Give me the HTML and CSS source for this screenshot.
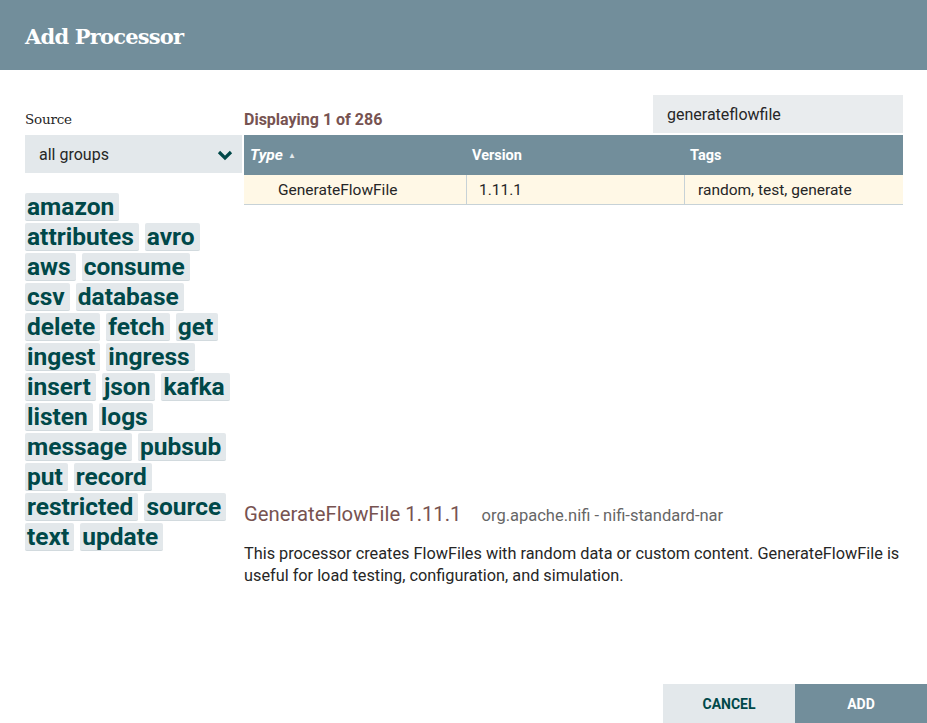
FILE: index.html
```html
<!DOCTYPE html>
<html>
<head>
<meta charset="utf-8">
<link rel="stylesheet" href="styles.css">
</head>
<body>
<div class="dialog">
  <div class="header">Add Processor</div>
  <div class="content">
    <div class="left">
      <div class="label">Source</div>
      <div class="select">
        <span>all groups</span>
        <svg class="chev" width="16" height="12" viewBox="0 0 16 12"><path d="M2 3 L8 9 L14 3" fill="none" stroke="#004849" stroke-width="3.2"/></svg>
      </div>
      <div class="tags">
        <span class="tag">amazon</span>
        <span class="tag">attributes</span><span class="tag">avro</span>
        <span class="tag">aws</span><span class="tag">consume</span>
        <span class="tag">csv</span><span class="tag">database</span>
        <span class="tag">delete</span><span class="tag">fetch</span><span class="tag">get</span>
        <span class="tag">ingest</span><span class="tag">ingress</span>
        <span class="tag">insert</span><span class="tag">json</span><span class="tag">kafka</span>
        <span class="tag">listen</span><span class="tag">logs</span>
        <span class="tag">message</span><span class="tag">pubsub</span>
        <span class="tag">put</span><span class="tag">record</span>
        <span class="tag">restricted</span><span class="tag">source</span>
        <span class="tag">text</span><span class="tag">update</span>
      </div>
    </div>
    <div class="right">
      <div class="toprow">
        <div class="count">Displaying 1 of 286</div>
        <div class="search">generateflowfile</div>
      </div>
      <div class="table">
        <div class="thead">
          <div class="th c1"><i>Type</i><span class="arrow">&#9650;</span></div>
          <div class="th c2">Version</div>
          <div class="th c3">Tags</div>
        </div>
        <div class="tr">
          <div class="td c1 name">GenerateFlowFile</div>
          <div class="td c2">1.11.1</div>
          <div class="td c3">random, test, generate</div>
        </div>
      </div>
      <div class="details">
        <div class="dtitle"><span class="dname">GenerateFlowFile 1.11.1</span><span class="dbundle">org.apache.nifi - nifi-standard-nar</span></div>
        <p class="desc">This processor creates FlowFiles with random data or custom content. GenerateFlowFile is useful for load testing, configuration, and simulation.</p>
      </div>
    </div>
  </div>
  <div class="footer">
    <div class="btn cancel">CANCEL</div>
    <div class="btn add">ADD</div>
  </div>
</div>
</body>
</html>
```
FILE: styles.css
```css
html, body { margin: 0; padding: 0; background: #fff; }
body { font-family: Roboto, "Noto Sans", sans-serif; color: #262626; }
.dialog { width: 927px; height: 723px; display: flex; flex-direction: column; overflow: hidden; }
.header {
  height: 70px; background: #728e9b; color: #fff;
  font-family: "DejaVu Serif", serif; font-weight: bold; font-size: 21px;
  letter-spacing: -0.8px;
  display: flex; align-items: center; padding: 3px 0 0 25px; box-sizing: border-box; flex: none;
}
.content { display: flex; padding: 25px 24px 0 25px; gap: 2px; }
.left { width: 217px; flex: none; }
.label { font-family: "DejaVu Serif", serif; font-size: 13.5px; color: #262626; height: 40px; display: flex; align-items: center; padding-top: 8px; box-sizing: border-box; letter-spacing: -0.2px; }
.select { height: 38px; background: #e3e8eb; display: flex; align-items: center; justify-content: space-between; padding: 0 9px 0 14px; font-size: 16px; color: #262626; }
.chev { margin-top: 1px; }
.tags { margin-top: 20px; display: flex; flex-wrap: wrap; column-gap: 6px; row-gap: 2px; width: 212px; }
.tag {
  background: #e3e8eb; color: #004849; font-weight: bold; font-size: 24.5px;
  height: 28px; line-height: 28px; padding: 0 5px 0 2px; border-bottom: 1px solid #d2dade; border-radius: 2px; box-sizing: border-box;
  white-space: nowrap;
}
.right { flex: 1; display: flex; flex-direction: column; }
.toprow { height: 40px; display: flex; justify-content: space-between; align-items: flex-end; }
.count { color: #775351; font-weight: bold; font-size: 16px; padding-bottom: 6px; }
.search { width: 250px; height: 38px; background: #e9ecee; box-sizing: border-box; padding-left: 14px; display: flex; align-items: center; font-size: 16px; color: #262626; margin-bottom: 2px; }
.table { height: 367px; }
.thead { height: 40px; background: #728e9b; color: #fff; font-weight: bold; font-size: 14.5px; display: flex; }
.th { display: flex; align-items: center; box-sizing: border-box; }
.th i { font-weight: bold; font-style: italic; font-size: 15.5px; }
.arrow { font-size: 8px; margin-left: 5px; color: #e3e8eb; }
.c1 { width: 223px; padding-left: 6px; box-sizing: border-box; }
.c2 { width: 218px; padding-left: 5px; box-sizing: border-box; }
.c3 { flex: 1; padding-left: 5px; box-sizing: border-box; }
.tr { height: 30px; background: #fff8e6; display: flex; border-bottom: 1px solid #c7d2d7; box-sizing: border-box; font-size: 15.5px; color: #262626; }
.td { display: flex; align-items: center; }
.td.c1, .td.c2 { border-right: 1px solid #c7d2d7; }
.td.c2 { width: 218px; padding-left: 12px; }
.td.c3 { padding-left: 13px; }
.name { padding-left: 34px; }
.dtitle { display: flex; align-items: baseline; }
.dname { color: #775351; font-size: 20.3px; }
.dbundle { color: #666; font-size: 16.5px; margin-left: 20px; }
.desc { margin: 17px 0 0; font-size: 16.3px; line-height: 22px; color: #262626; }
.footer { margin-top: auto; display: flex; justify-content: flex-end; }
.btn { width: 132px; height: 39px; display: flex; align-items: center; justify-content: center; font-weight: bold; font-size: 14px; }
.cancel { background: #e3e8eb; color: #004849; }
.add { background: #728e9b; color: #fff; }
```
